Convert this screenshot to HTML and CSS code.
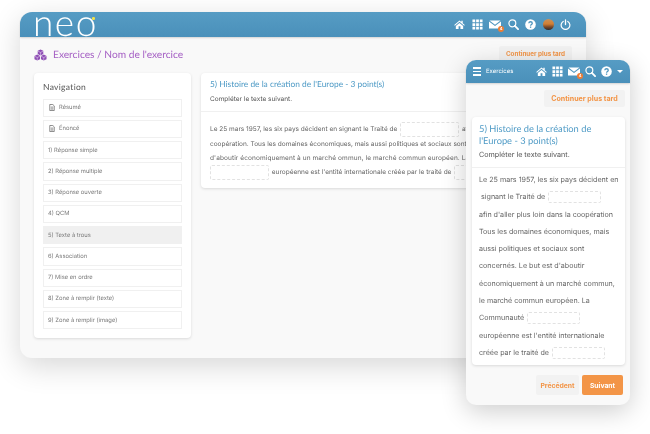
FILE: index.html
```html
<!DOCTYPE html>
<html lang="fr">
<head>
    <meta charset="UTF-8">
    <title>Exercices</title>
    <link rel="stylesheet" href="styles.css">
</head>
<body>
    <svg class="sprites" width="0" height="0">
        <defs>
            <linearGradient id="avatarFill" x1="0" y1="0" x2="0" y2="1">
                <stop offset="0%" stop-color="#c9915a"/>
                <stop offset="45%" stop-color="#d27f34"/>
                <stop offset="72%" stop-color="#7d4a28"/>
                <stop offset="100%" stop-color="#2e2a2c"/>
            </linearGradient>
            <symbol id="i-home" viewBox="0 0 24 24">
                <path fill="#fff" d="M12 3 0.5 13l1.4 1.6L12 5.8l10.1 8.8 1.4-1.6L19 9V4h-3v2.4zM4 15.5V22h6v-6h4v6h6v-6.5L12 8.5z"/>
            </symbol>
            <symbol id="i-grid" viewBox="0 0 24 24">
                <path fill="#fff" d="M1 1h6v6H1zM9 1h6v6H9zM17 1h6v6h-6zM1 9h6v6H1zM9 9h6v6H9zM17 9h6v6h-6zM1 17h6v6H1zM9 17h6v6H9zM17 17h6v6h-6z"/>
            </symbol>
            <symbol id="i-mail" viewBox="0 0 24 18">
                <path fill="#fff" d="M1 1h22L12 9.5zM0 3l12 9 12-9v14H0z"/>
            </symbol>
            <symbol id="i-search" viewBox="0 0 24 24">
                <circle cx="9.5" cy="9.5" r="7.5" fill="none" stroke="#fff" stroke-width="2.6"/>
                <path d="M15 15l7 7" stroke="#fff" stroke-width="4" stroke-linecap="round"/>
            </symbol>
            <symbol id="i-help" viewBox="0 0 24 24">
                <circle cx="12" cy="12" r="11.5" fill="#fff"/>
                <path d="M8.2 9.2c.3-2.2 2-3.2 3.9-3.2 2.2 0 3.8 1.3 3.8 3.2 0 2.8-3.6 2.8-3.6 5.4" fill="none" stroke="#4f96bf" stroke-width="2.8"/>
                <rect x="10.7" y="16.4" width="2.9" height="2.9" fill="#4f96bf"/>
            </symbol>
            <symbol id="i-power" viewBox="0 0 24 24">
                <path d="M7 5.2a9.5 9.5 0 1 0 10 0" fill="none" stroke="#fff" stroke-width="2.6" stroke-linecap="round"/>
                <path d="M12 2v10" stroke="#fff" stroke-width="2.8" stroke-linecap="round"/>
            </symbol>
            <symbol id="i-doc" viewBox="0 0 12 14">
                <path d="M1.5 1h6.2L10.5 3.8V13h-9z" fill="none" stroke="#555" stroke-width="1.3"/>
                <path d="M3.5 6h5M3.5 8.2h5M3.5 10.4h5" stroke="#555" stroke-width="1"/>
            </symbol>
            <symbol id="i-cubes" viewBox="0 0 28 24">
                <path fill="#8f4fb5" d="M14 0l6 3v7l-6 3-6-3V3zM7 11l6 3v7l-6 3-6-3v-7zM21 11l6 3v7l-6 3-6-3v-7z"/>
                <path d="M8 3.5l6 3 6-3M14 6.5V13M1 14.5l6 3 6-3M7 17.5V24M15 14.5l6 3 6-3M21 17.5V24" fill="none" stroke="#f3e9f8" stroke-width="1"/>
            </symbol>
        </defs>
    </svg>

    <!-- Fenetre bureau -->
    <div class="window desktop">
        <header class="topbar">
            <span class="logo">ne<span class="logo-o">o</span></span>
            <nav class="tools">
                <svg class="ico"><use href="#i-home"/></svg>
                <svg class="ico"><use href="#i-grid"/></svg>
                <span class="mail"><svg class="ico"><use href="#i-mail"/></svg><b class="badge">4</b></span>
                <svg class="ico"><use href="#i-search"/></svg>
                <svg class="ico"><use href="#i-help"/></svg>
                <svg class="ico" viewBox="0 0 24 24"><circle cx="12" cy="12" r="12" fill="url(#avatarFill)"/></svg>
                <svg class="ico"><use href="#i-power"/></svg>
            </nav>
        </header>
        <div class="page-head">
            <h1 class="crumb"><svg class="crumb-ico"><use href="#i-cubes"/></svg>Exercices / Nom de l'exercice</h1>
            <button class="btn btn-later">Continuer plus tard</button>
        </div>
        <div class="columns">
            <aside class="side card">
                <h2>Navigation</h2>
                <ul class="steps">
                    <li><svg class="doc"><use href="#i-doc"/></svg>Résumé</li>
                    <li><svg class="doc"><use href="#i-doc"/></svg>Énoncé</li>
                    <li>1) Réponse simple</li>
                    <li>2) Réponse multiple</li>
                    <li>3) Réponse ouverte</li>
                    <li>4) QCM</li>
                    <li class="active">5) Texte à trous</li>
                    <li>6) Association</li>
                    <li>7) Mise en ordre</li>
                    <li>8) Zone à remplir (texte)</li>
                    <li>9) Zone à remplir (image)</li>
                </ul>
            </aside>
            <section class="card exo">
                <div class="exo-head">
                    <h3>5) Histoire de la création de l'Europe - 3 point(s)</h3>
                    <p>Compléter le texte suivant.</p>
                </div>
                <p class="exo-text">
                    Le 25 mars 1957, les six pays décident en signant le Traité de <span class="blank"></span> afin d'aller plus loin dans la<br>
                    coopération. Tous les domaines économiques, mais aussi politiques et sociaux sont concernés.<br>
                    <span class="line-wide">d'aboutir économiquement à un marché ommun, le marché commun européen. La Communauté</span><br>
                    <span class="blank first"></span> européenne est l'entité internationale créée par le traité de <span class="blank"></span>
                </p>
            </section>
        </div>
    </div>

    <!-- Fenetre mobile -->
    <div class="window phone">
        <header class="topbar">
            <span class="burger"><i></i><i></i><i></i></span>
            <span class="bar-title">Exercices</span>
            <nav class="tools">
                <svg class="ico"><use href="#i-home"/></svg>
                <svg class="ico"><use href="#i-grid"/></svg>
                <span class="mail"><svg class="ico"><use href="#i-mail"/></svg><b class="badge">4</b></span>
                <svg class="ico"><use href="#i-search"/></svg>
                <svg class="ico"><use href="#i-help"/></svg>
                <span class="caret"></span>
            </nav>
        </header>
        <div class="phone-top">
            <button class="btn btn-later">Continuer plus tard</button>
        </div>
        <section class="card exo">
            <div class="exo-head">
                <h3>5) Histoire de la création de l'Europe - 3 point(s)</h3>
                <p>Compléter le texte suivant.</p>
            </div>
            <p class="exo-text">
                Le 25 mars 1957, les six pays décident en<br>
                &nbsp;signant le Traité de <span class="blank"></span><br>
                afin d'aller plus loin dans la coopération<br>
                Tous les domaines économiques, mais<br>
                aussi politiques et sociaux sont<br>
                concernés. Le but est d'aboutir<br>
                économiquement à un marché commun,<br>
                le marché commun européen. La<br>
                Communauté <span class="blank"></span><br>
                européenne est l'entité internationale<br>
                créée par le traité de <span class="blank"></span>
            </p>
        </section>
        <div class="phone-foot">
            <button class="btn btn-prev">Précédent</button>
            <button class="btn btn-next">Suivant</button>
        </div>
    </div>
</body>
</html>
```

FILE: styles.css
```css
html, body {
    margin: 0;
    padding: 0;
    width: 650px;
    height: 434px;
    overflow: hidden;
    background: #fff;
    font-family: 'Inter', 'Liberation Sans', sans-serif;
    color: #666;
    text-rendering: geometricPrecision;
}
.sprites {
    position: absolute;
}
.window {
    position: absolute;
    display: flex;
    flex-direction: column;
    background: #f9f9f9;
    filter: blur(0.3px);
}
.desktop {
    left: 20px;
    top: 12px;
    width: 566px;
    height: 346px;
    border-radius: 12px;
    box-shadow: 0 8px 30px rgba(0,0,0,0.16);
}
.phone {
    left: 466px;
    top: 60px;
    width: 164px;
    height: 345px;
    border-radius: 10px;
    box-shadow: 0 6px 26px rgba(0,0,0,0.2);
}
.topbar {
    flex: none;
    display: flex;
    align-items: center;
    background: linear-gradient(180deg, #569cc4 0%, #4a90ba 100%);
    box-shadow: 0 1px 2px rgba(0,0,0,0.15);
}
.desktop .topbar {
    height: 25px;
    padding: 0 15px 0 13px;
    border-radius: 12px 12px 0 0;
}
.phone .topbar {
    height: 23px;
    padding: 0 7px 0 7px;
    border-radius: 10px 10px 0 0;
}
.logo {
    font-family: 'Lato', sans-serif;
    font-weight: 300;
    font-size: 37px;
    line-height: 25px;
    letter-spacing: 1.5px;
    color: #fff;
    position: relative;
    top: -3px;
}
.logo-o {
    position: relative;
}
.logo-o::after {
    content: '';
    position: absolute;
    right: 3px;
    top: 18px;
    width: 2.5px;
    height: 2.5px;
    border-radius: 50%;
    background: #f2e24a;
}
.tools {
    margin-left: auto;
    display: flex;
    align-items: center;
}
.desktop .tools {
    gap: 6.5px;
}
.phone .tools {
    gap: 5px;
}
.ico {
    display: block;
    width: 11px;
    height: 11px;
}
.mail {
    position: relative;
}
.mail .ico {
    width: 12px;
    height: 9px;
}
.badge {
    position: absolute;
    right: -3px;
    bottom: -3px;
    width: 6px;
    height: 6px;
    border-radius: 50%;
    background: #ee7d34;
    color: #fff;
    font-size: 4px;
    line-height: 6px;
    text-align: center;
}
.burger {
    display: flex;
    flex-direction: column;
    gap: 2px;
    width: 8px;
    margin-right: 5px;
}
.burger i {
    height: 1.5px;
    background: #fff;
}
.bar-title {
    font-size: 6px;
    color: #fff;
}
.caret {
    width: 0;
    height: 0;
    border: 3px solid transparent;
    border-top: 3.5px solid #fff;
    border-bottom: 0;
}
.page-head {
    display: flex;
    justify-content: space-between;
    align-items: center;
    padding: 9px 14px 11.5px 14px;
}
.crumb {
    margin: 0;
    display: flex;
    align-items: center;
    gap: 6px;
    font-family: 'Lato', sans-serif;
    font-size: 10.2px;
    font-weight: 400;
    color: #a560c4;
    position: relative;
    top: 1px;
}
.crumb-ico {
    width: 13px;
    height: 12px;
}
.btn {
    border: none;
    border-radius: 2px;
    font-family: 'Inter', sans-serif;
    font-weight: 700;
    color: #f39547;
    background: #f2f2f2;
}
.desktop .btn-later {
    width: 73px;
    height: 15px;
    padding: 0;
    font-size: 6.3px;
}
.columns {
    display: flex;
    gap: 9.5px;
    padding: 0 14px;
}
.card {
    background: #fff;
    border-radius: 4px;
    box-shadow: 0 1px 3px rgba(0,0,0,0.13);
}
.side {
    flex: none;
    width: 157px;
    height: 265px;
    padding: 10px 9px;
    box-sizing: border-box;
}
.side h2 {
    margin: 0 0 7px 0;
    font-family: 'Lato', sans-serif;
    font-size: 8.5px;
    line-height: 9px;
    font-weight: 400;
    letter-spacing: 0.3px;
    color: #555;
}
.steps {
    list-style: none;
    margin: 0;
    padding: 0;
    display: flex;
    flex-direction: column;
    gap: 3px;
}
.steps li {
    display: flex;
    align-items: center;
    height: 18.25px;
    box-sizing: border-box;
    padding: 0 4px;
    border: 1px solid #f0f0f0;
    font-size: 5.8px;
    color: #777;
}
.steps li.active {
    background: #f0f0f0;
}
.doc {
    width: 6px;
    height: 7px;
    margin: 0 4px 0 1px;
}
.desktop .exo {
    flex: none;
    width: 372px;
    height: 115px;
}
.exo-head {
    border-bottom: 1px solid #f0f0f0;
}
.desktop .exo-head {
    height: 38px;
    padding: 0 10px 0 9.5px;
}
.exo h3 {
    margin: 0;
    font-family: 'Lato', sans-serif;
    font-weight: 400;
    color: #4f9bc6;
}
.desktop .exo h3 {
    font-size: 8.4px;
    line-height: 11px;
    padding-top: 6px;
}
.exo-head p {
    margin: 0;
    color: #555;
}
.desktop .exo-head p {
    font-size: 6.5px;
    line-height: 8px;
    margin-top: 5px;
}
.exo-text {
    margin: 0;
    color: #666;
    white-space: nowrap;
}
.desktop .exo-text {
    padding: 10px 10px 0 9.5px;
    font-size: 6.5px;
    line-height: 14px;
}
.line-wide {
    letter-spacing: 0.1px;
}
.blank {
    display: inline-block;
    vertical-align: middle;
    width: 59px;
    height: 15px;
    box-sizing: border-box;
    border: 1px dashed #e2e2e2;
    border-radius: 2px;
    background: #fff;
    margin: 0 1px;
}
.blank.first {
    margin-left: 0;
}
.phone-top {
    display: flex;
    justify-content: flex-end;
    padding: 7px 5px 10px 0;
}
.phone .btn-later {
    width: 81px;
    height: 17px;
    padding: 0;
    font-size: 7.1px;
}
.phone .exo {
    margin: 0 5px 0 6px;
    height: 248px;
    flex: none;
}
.phone .exo-head {
    padding: 6px 7px 7px 7px;
    height: 37px;
}
.phone .exo h3 {
    font-size: 9.3px;
    line-height: 11.5px;
}
.phone .exo-head p {
    font-size: 7.2px;
    line-height: 8px;
    margin-top: 5px;
}
.phone .exo-text {
    padding: 3px 7px 0 7px;
    font-size: 7.15px;
    line-height: 17.3px;
}
.phone .blank {
    width: 53px;
    height: 12px;
}
.phone-foot {
    display: flex;
    justify-content: flex-end;
    gap: 3px;
    padding: 10px 7px 0 0;
}
.btn-prev, .btn-next {
    height: 20px;
    padding: 0;
    font-size: 6.8px;
}
.btn-prev {
    width: 43px;
}
.btn-next {
    width: 41px;
    background: #f39547;
    color: #fff;
}
```
